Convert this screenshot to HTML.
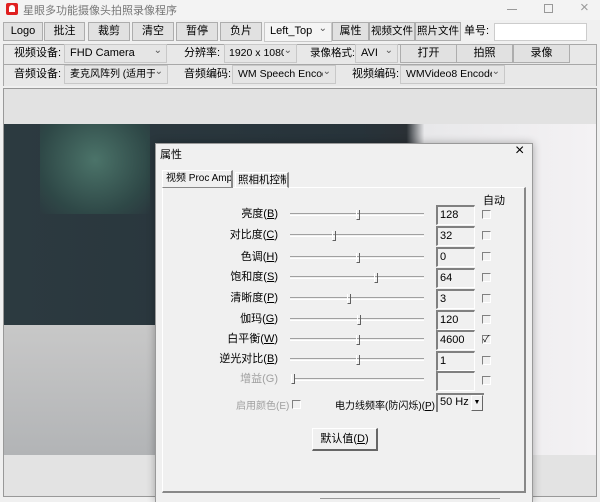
<!DOCTYPE html>
<html><head><meta charset="utf-8"><style>
*{box-sizing:border-box;margin:0;padding:0}
body{width:600px;height:502px;overflow:hidden;background:#f0f0f0;font-family:"Liberation Sans","Noto Sans CJK SC",sans-serif;font-size:11px;color:#000;position:relative}
.a{position:absolute;white-space:nowrap}
.btn{position:absolute;height:19px;background:#e1e1e1;border:1px solid #adadad;text-align:center;line-height:17px;font-size:11px;white-space:nowrap;overflow:hidden}
.cb{position:absolute;height:19px;background:#e5e5e5;border:1px solid #c8c8c8;line-height:17px;padding-left:5px;font-size:11px;white-space:nowrap;overflow:hidden}
.cb span{display:block;overflow:hidden;margin-right:12px}
.cb:after{content:"⌄";position:absolute;right:4px;top:-3px;font-size:10px;color:#555}
.lbl{position:absolute;font-size:11px;line-height:19px;white-space:nowrap}
.track{position:absolute;left:290px;width:134px;height:3px;border-top:1px solid #a0a0a0;border-bottom:1px solid #fff}
.thumb{position:absolute;width:4px;height:10px;border-left:1px solid #fff;border-right:1px solid #606060;border-bottom:1px solid #606060}
.edit{position:absolute;left:436px;width:39px;height:20px;border-top:2px solid #808080;border-left:2px solid #808080;border-right:1px solid #fff;border-bottom:1px solid #fff;background:#f0f0f0;font-size:11px;padding-left:2px;line-height:17px}
.chk{position:absolute;left:482px;width:9px;height:9px;border-top:1px solid #808080;border-left:1px solid #808080;border-right:1px solid #fff;border-bottom:1px solid #fff}
.pl{position:absolute;right:322px;font-size:11px;line-height:14px;text-align:right;white-space:nowrap}
u{text-decoration:underline}
</style></head><body>
<div class="a" style="left:0;top:0;width:600px;height:20px;background:#f3f3f3"></div>
<div class="a" style="left:6px;top:3px;width:12px;height:12px;background:#e02020;border-radius:2px"></div>
<div class="a" style="left:9px;top:5px;width:6px;height:7px;background:#fff;border-radius:3px 3px 0 0"></div>
<div class="a" style="left:23px;top:2px;font-size:11px;color:#777">星眼多功能摄像头拍照录像程序</div>
<div class="a" style="left:507px;top:9px;width:10px;height:1px;background:#999"></div>
<div class="a" style="left:544px;top:4px;width:9px;height:9px;border:1px solid #999"></div>
<div class="a" style="left:580px;top:-1px;font-size:15px;color:#999">×</div>
<div class="btn" style="left:3px;top:22px;width:40px">Logo</div>
<div class="btn" style="left:44px;top:22px;width:41px">批注</div>
<div class="btn" style="left:88px;top:22px;width:42px">裁剪</div>
<div class="btn" style="left:132px;top:22px;width:42px">清空</div>
<div class="btn" style="left:176px;top:22px;width:42px">暂停</div>
<div class="btn" style="left:220px;top:22px;width:42px">负片</div>
<div class="cb" style="left:264px;top:22px;width:68px;background:#f4f4f4;height:20px"><span>Left_Top</span></div>
<div class="btn" style="left:332px;top:22px;width:37px">属性</div>
<div class="btn" style="left:369px;top:22px;width:46px;font-size:10.5px">视频文件</div>
<div class="btn" style="left:415px;top:22px;width:46px;font-size:10.5px">照片文件</div>
<div class="lbl" style="left:464px;top:22px">单号:</div>
<div class="a" style="left:494px;top:23px;width:93px;height:18px;background:#fff;border:1px solid #ccc"></div>
<div class="a" style="left:3px;top:44px;width:594px;height:21px;border:1px solid #a8a8a8;background:#e8e8e8"></div>
<div class="lbl" style="left:14px;top:44px">视频设备:</div>
<div class="cb" style="left:64px;top:44px;width:103px"><span>FHD Camera</span></div>
<div class="lbl" style="left:184px;top:44px">分辨率:</div>
<div class="cb" style="left:224px;top:44px;width:73px;padding-left:4px;font-size:10.5px"><span>1920 x 1080</span></div>
<div class="lbl" style="left:310px;top:44px;font-size:10.5px">录像格式:</div>
<div class="cb" style="left:355px;top:44px;width:43px"><span>AVI</span></div>
<div class="btn" style="left:400px;top:44px;width:57px">打开</div>
<div class="btn" style="left:456px;top:44px;width:57px">拍照</div>
<div class="btn" style="left:513px;top:44px;width:57px">录像</div>
<div class="a" style="left:3px;top:65px;width:594px;height:21px;border-left:1px solid #a8a8a8;border-right:1px solid #a8a8a8;background:#e8e8e8"></div>
<div class="lbl" style="left:14px;top:65px">音频设备:</div>
<div class="cb" style="left:64px;top:65px;width:104px;font-size:10px"><span>麦克风阵列 (适用于数</span></div>
<div class="lbl" style="left:184px;top:65px">音频编码:</div>
<div class="cb" style="left:232px;top:65px;width:104px;font-size:10.5px"><span>WM Speech Encoder</span></div>
<div class="lbl" style="left:352px;top:65px">视频编码:</div>
<div class="cb" style="left:400px;top:65px;width:105px;font-size:10.5px"><span>WMVideo8 Encoder</span></div>
<div class="a" style="left:3px;top:88px;width:594px;height:409px;border:1px solid #999;background:#e2e2e2"></div>
<div class="a" style="left:4px;top:124px;width:592px;height:331px;background:linear-gradient(90deg,#2c3a40 0%,#27333a 60%,#2a3035 68%,#e8e8ea 71%,#f4f2f4 100%)"></div>
<div class="a" style="left:40px;top:124px;width:110px;height:90px;background:radial-gradient(ellipse at 50% 40%,#4f7a6e,#2f4a48 70%,transparent 100%);opacity:.9"></div>
<div class="a" style="left:4px;top:325px;width:410px;height:130px;background:linear-gradient(180deg,#c8c8c8,#b2b4b6)"></div>
<div class="a" style="left:4px;top:455px;width:592px;height:40px;background:#e3e3e3"></div>
<div class="a" style="left:155px;top:143px;width:378px;height:359px;background:#f0f0f0;border:1px solid #999;border-bottom:none;box-shadow:0 0 8px rgba(0,0,0,.3)"></div>
<div class="a" style="left:160px;top:146px;font-size:11px">属性</div>
<div class="a" style="left:515px;top:142px;font-size:16px">×</div>
<div class="a" style="left:162px;top:187px;width:364px;height:306px;border:1px solid #fff;border-right:2px solid #888;border-bottom:2px solid #888"></div>
<div class="a" style="left:162px;top:170px;width:71px;height:18px;border:1px solid #fff;border-right:2px solid #888;border-bottom:1px solid #888;background:#f0f0f0;font-size:10px;padding-left:3px;line-height:15px;overflow:hidden">视频 Proc Amp</div>
<div class="a" style="left:235px;top:172px;width:54px;height:16px;border:1px solid #fff;border-right:2px solid #888;font-size:10.5px;padding-left:2px;line-height:14px;overflow:hidden">照相机控制</div>
<div class="a" style="left:483px;top:192px">自动</div>
<div class="pl" style="top:207px">亮度(<u>B</u>)</div>
<div class="pl" style="top:228px">对比度(<u>C</u>)</div>
<div class="pl" style="top:250px">色调(<u>H</u>)</div>
<div class="pl" style="top:270px">饱和度(<u>S</u>)</div>
<div class="pl" style="top:291px">清晰度(<u>P</u>)</div>
<div class="pl" style="top:312px">伽玛(<u>G</u>)</div>
<div class="pl" style="top:332px">白平衡(<u>W</u>)</div>
<div class="pl" style="top:352px">逆光对比(<u>B</u>)</div>
<div class="pl" style="top:372px;color:#a0a0a0">增益(G)</div>
<div class="track" style="top:213px"></div><div class="thumb" style="left:356px;top:210px"></div>
<div class="track" style="top:234px"></div><div class="thumb" style="left:332px;top:231px"></div>
<div class="track" style="top:256px"></div><div class="thumb" style="left:356px;top:253px"></div>
<div class="track" style="top:276px"></div><div class="thumb" style="left:374px;top:273px"></div>
<div class="track" style="top:297px"></div><div class="thumb" style="left:347px;top:294px"></div>
<div class="track" style="top:318px"></div><div class="thumb" style="left:357px;top:315px"></div>
<div class="track" style="top:338px"></div><div class="thumb" style="left:356px;top:335px"></div>
<div class="track" style="top:358px"></div><div class="thumb" style="left:356px;top:355px"></div>
<div class="track" style="top:378px;left:294px;width:130px"></div><div class="thumb" style="left:291px;top:374px"></div>
<div class="edit" style="top:205px">128</div><div class="chk" style="top:210px"></div>
<div class="edit" style="top:226px">32</div><div class="chk" style="top:231px"></div>
<div class="edit" style="top:247px">0</div><div class="chk" style="top:252px"></div>
<div class="edit" style="top:268px">64</div><div class="chk" style="top:273px"></div>
<div class="edit" style="top:289px">3</div><div class="chk" style="top:294px"></div>
<div class="edit" style="top:310px">120</div><div class="chk" style="top:315px"></div>
<div class="edit" style="top:330px">4600</div><div class="chk" style="top:335px;font-size:9px;line-height:7px">✓</div>
<div class="edit" style="top:351px">1</div><div class="chk" style="top:356px"></div>
<div class="edit" style="top:371px"></div><div class="chk" style="top:376px"></div>
<div class="a" style="left:236px;top:397px;color:#a0a0a0;font-size:10px">启用颜色(E)</div>
<div class="chk" style="left:292px;top:400px"></div>
<div class="a" style="left:335px;top:397px;font-size:10px">电力线频率(防闪烁)(<u>P</u>)</div>
<div class="a" style="left:436px;top:393px;width:48px;height:19px;border-top:2px solid #808080;border-left:2px solid #808080;background:#f0f0f0;padding-left:2px;line-height:15px">50 Hz</div>
<div class="a" style="left:471px;top:395px;width:12px;height:16px;border:1px solid #fff;border-right-color:#666;border-bottom-color:#666;font-size:7px;text-align:center;line-height:14px">▼</div>
<div class="a" style="left:312px;top:428px;width:66px;height:23px;border:1px solid #fff;border-right:2px solid #666;border-bottom:2px solid #666;text-align:center;line-height:20px">默认值(<u>D</u>)</div>
<div class="a" style="left:320px;top:498px;width:180px;height:4px;border-top:1px solid #999"></div>
</body></html>
